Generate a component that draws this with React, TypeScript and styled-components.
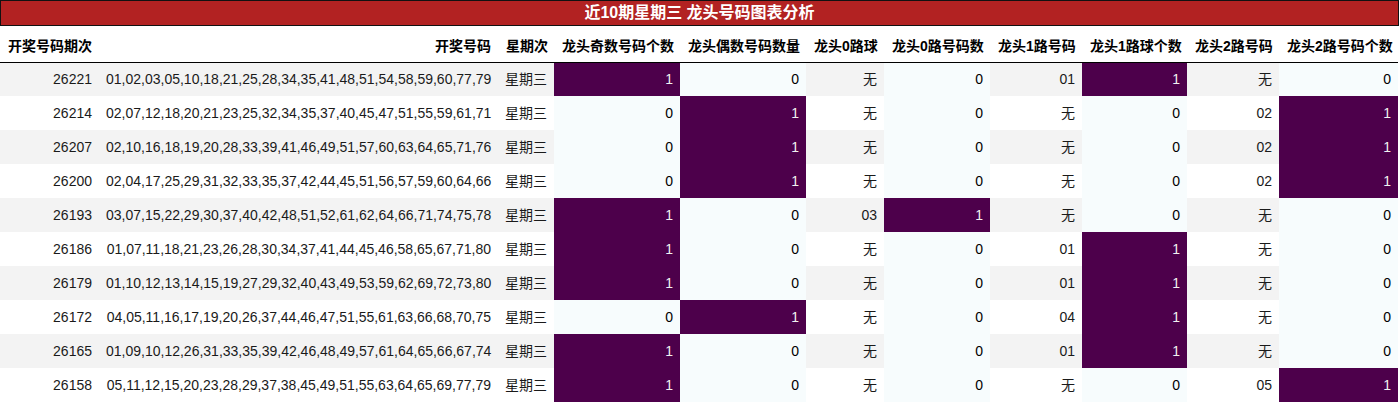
import React from "react";
import styled, { createGlobalStyle } from "styled-components";

const GlobalStyle = createGlobalStyle`
  html, body { margin: 0; padding: 0; background: #ffffff; }
  body { font-family: "Liberation Sans", "Noto Sans CJK SC", sans-serif; }
`;

const Page = styled.div`
  width: 1400px;
  font-family: "Liberation Sans", "Noto Sans CJK SC", sans-serif;
  color: #1a1a1a;
`;

const TitleBar = styled.div`
  box-sizing: border-box;
  width: 1399px;
  height: 26px;
  border: 1px solid #111111;
  background: #b22222;
  color: #ffffff;
  font-weight: bold;
  font-size: 16px;
  line-height: 23px;
  text-align: center;
`;

const Table = styled.table`
  width: 1398px;
  table-layout: fixed;
  border-collapse: collapse;
  border-spacing: 0;
  font-size: 14px;
`;

const HeadCell = styled.th<{ $align?: "left" | "right" }>`
  box-sizing: border-box;
  padding: 10px 7px 5px 8px;
  height: 36px;
  line-height: 20px;
  font-weight: bold;
  color: #000000;
  text-align: ${(p) => p.$align ?? "right"};
  white-space: nowrap;
  border-bottom: 1px solid #000000;
  background: #ffffff;
`;

const Row = styled.tr<{ $odd: boolean }>`
  background: ${(p) => (p.$odd ? "#f3f3f3" : "#ffffff")};
`;

const Cell = styled.td`
  box-sizing: border-box;
  height: 34px;
  padding: 0 7px 0 7px;
  text-align: right;
  white-space: nowrap;
  line-height: 20px;
`;

const HeatCell = styled(Cell)<{ $value: number }>`
  background: ${(p) => (p.$value ? "#4d004b" : "#f7fcfd")};
  color: ${(p) => (p.$value ? "#f1f1f1" : "#000000")};
`;

type Rec = {
  period: string;
  nums: string;
  odd: number;
  even: number;
  zeroBall: string;
  zeroCount: number;
  oneCode: string;
  oneCount: number;
  twoCode: string;
  twoCount: number;
};

const data: Rec[] = [
  { period: "26221", nums: "01,02,03,05,10,18,21,25,28,34,35,41,48,51,54,58,59,60,77,79", odd: 1, even: 0, zeroBall: "无", zeroCount: 0, oneCode: "01", oneCount: 1, twoCode: "无", twoCount: 0 },
  { period: "26214", nums: "02,07,12,18,20,21,23,25,32,34,35,37,40,45,47,51,55,59,61,71", odd: 0, even: 1, zeroBall: "无", zeroCount: 0, oneCode: "无", oneCount: 0, twoCode: "02", twoCount: 1 },
  { period: "26207", nums: "02,10,16,18,19,20,28,33,39,41,46,49,51,57,60,63,64,65,71,76", odd: 0, even: 1, zeroBall: "无", zeroCount: 0, oneCode: "无", oneCount: 0, twoCode: "02", twoCount: 1 },
  { period: "26200", nums: "02,04,17,25,29,31,32,33,35,37,42,44,45,51,56,57,59,60,64,66", odd: 0, even: 1, zeroBall: "无", zeroCount: 0, oneCode: "无", oneCount: 0, twoCode: "02", twoCount: 1 },
  { period: "26193", nums: "03,07,15,22,29,30,37,40,42,48,51,52,61,62,64,66,71,74,75,78", odd: 1, even: 0, zeroBall: "03", zeroCount: 1, oneCode: "无", oneCount: 0, twoCode: "无", twoCount: 0 },
  { period: "26186", nums: "01,07,11,18,21,23,26,28,30,34,37,41,44,45,46,58,65,67,71,80", odd: 1, even: 0, zeroBall: "无", zeroCount: 0, oneCode: "01", oneCount: 1, twoCode: "无", twoCount: 0 },
  { period: "26179", nums: "01,10,12,13,14,15,19,27,29,32,40,43,49,53,59,62,69,72,73,80", odd: 1, even: 0, zeroBall: "无", zeroCount: 0, oneCode: "01", oneCount: 1, twoCode: "无", twoCount: 0 },
  { period: "26172", nums: "04,05,11,16,17,19,20,26,37,44,46,47,51,55,61,63,66,68,70,75", odd: 0, even: 1, zeroBall: "无", zeroCount: 0, oneCode: "04", oneCount: 1, twoCode: "无", twoCount: 0 },
  { period: "26165", nums: "01,09,10,12,26,31,33,35,39,42,46,48,49,57,61,64,65,66,67,74", odd: 1, even: 0, zeroBall: "无", zeroCount: 0, oneCode: "01", oneCount: 1, twoCode: "无", twoCount: 0 },
  { period: "26158", nums: "05,11,12,15,20,23,28,29,37,38,45,49,51,55,63,64,65,69,77,79", odd: 1, even: 0, zeroBall: "无", zeroCount: 0, oneCode: "无", oneCount: 0, twoCode: "05", twoCount: 1 },
];

const columns = [
  { label: "开奖号码期次", width: 99, align: "left" as const },
  { label: "开奖号码", width: 399 },
  { label: "星期次", width: 56 },
  { label: "龙头奇数号码个数", width: 126 },
  { label: "龙头偶数号码数量", width: 126 },
  { label: "龙头0路球", width: 78 },
  { label: "龙头0路号码数", width: 106 },
  { label: "龙头1路号码", width: 92 },
  { label: "龙头1路球个数", width: 105 },
  { label: "龙头2路号码", width: 92 },
  { label: "龙头2路号码个数", width: 119 },
];

export default function App() {
  return (
    <Page>
      <GlobalStyle />
      <TitleBar>近10期星期三 龙头号码图表分析</TitleBar>
      <Table>
        <colgroup>
          {columns.map((c) => (
            <col key={c.label} style={{ width: c.width }} />
          ))}
        </colgroup>
        <thead>
          <tr>
            {columns.map((c) => (
              <HeadCell key={c.label} $align={c.align}>
                {c.label}
              </HeadCell>
            ))}
          </tr>
        </thead>
        <tbody>
          {data.map((r, i) => (
            <Row key={r.period} $odd={i % 2 === 0}>
              <Cell>{r.period}</Cell>
              <Cell>{r.nums}</Cell>
              <Cell>星期三</Cell>
              <HeatCell $value={r.odd}>{r.odd}</HeatCell>
              <HeatCell $value={r.even}>{r.even}</HeatCell>
              <Cell>{r.zeroBall}</Cell>
              <HeatCell $value={r.zeroCount}>{r.zeroCount}</HeatCell>
              <Cell>{r.oneCode}</Cell>
              <HeatCell $value={r.oneCount}>{r.oneCount}</HeatCell>
              <Cell>{r.twoCode}</Cell>
              <HeatCell $value={r.twoCount}>{r.twoCount}</HeatCell>
            </Row>
          ))}
        </tbody>
      </Table>
    </Page>
  );
}
